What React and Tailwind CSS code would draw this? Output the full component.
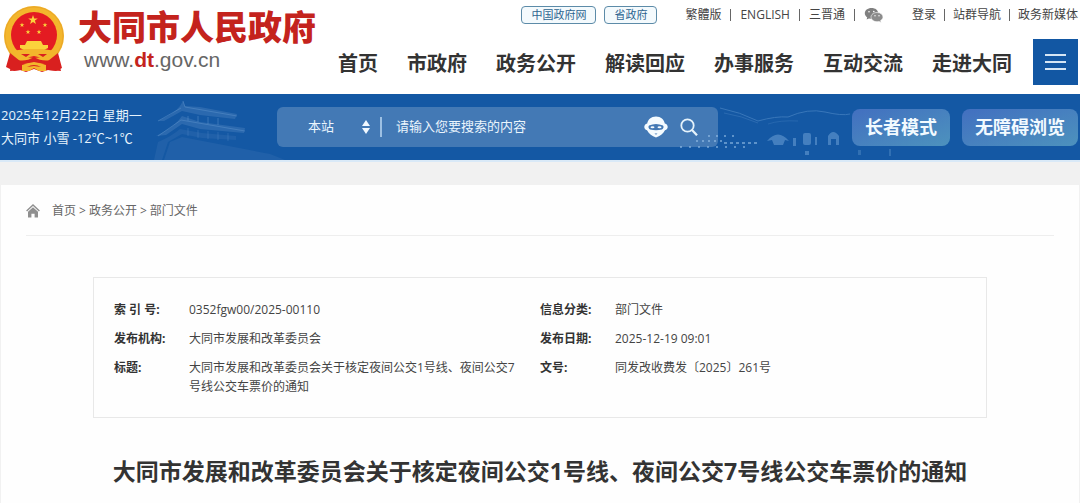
import React, { useState } from 'react';

const navItems = ['首页', '市政府', '政务公开', '解读回应', '办事服务', '互动交流', '走进大同'];

const docInfo = [
  { label: '索 引 号:', value: '0352fgw00/2025-00110' },
  { label: '信息分类:', value: '部门文件' },
  { label: '发布机构:', value: '大同市发展和改革委员会' },
  { label: '发布日期:', value: '2025-12-19 09:01' },
  { label: '标题:', value: '大同市发展和改革委员会关于核定夜间公交1号线、夜间公交7号线公交车票价的通知' },
  { label: '文号:', value: '同发改收费发〔2025〕261号' },
];

const star = 'M0 -5 L1.2 -1.6 L4.8 -1.5 L1.9 0.6 L2.9 4 L0 2 L-2.9 4 L-1.9 0.6 L-4.8 -1.5 L-1.2 -1.6 Z';

const Emblem = () => (
  <svg viewBox="0 0 64 68" className="h-[68px] w-16 shrink-0" aria-hidden="true">
    <path d="M10 52 L8 66 L18 65 L24 67 L32 64 L40 67 L46 65 L59 66 L55 50 Z" fill="#d9201f" />
    <circle cx="32" cy="31" r="30" fill="#f3b62c" />
    <circle cx="32" cy="31" r="29" fill="none" stroke="#eaa628" strokeWidth="1" />
    <circle cx="32" cy="30" r="23" fill="#e41b22" />
    <g fill="#fbd23c">
      <path d={star} transform="translate(31 15)" />
      <path d={star} transform="translate(20 20) scale(.5)" />
      <path d={star} transform="translate(43 20) scale(.5)" />
      <path d={star} transform="translate(26 27) scale(.5)" />
      <path d={star} transform="translate(37 27) scale(.5)" />
      <path d="M25 36 h14 l2 4 h5 v3 l-4 2 h-20 l-4 -2 v-3 h5 Z" />
    </g>
    <path d="M9 46 L24 44 H40 L55 46 L45 54 L32 51 L19 54 Z" fill="#f3b62c" />
    <path d="M19 49 H28 L24 52 Z M36 49 H45 L41 52 Z" fill="#d9201f" />
    <path d="M15 55 Q24 57 32 52 Q40 57 49 55 L47 60 L32 57 L17 60 Z" fill="#d9201f" />
    <path d="M20 60 Q32 56 44 60 V66 H37 L32 63 L27 66 H20 Z" fill="#f3b62c" />
    <path d="M25 62 Q32 58 39 62 L32 61 Z" fill="#d9201f" />
    <path d="M8 48 L4 62 L12 66 L19 65 L18 56 Z M56 48 L60 63 L54 66 L46 65 L46 56 Z" fill="#d9201f" />
  </svg>
);

const WechatIcon = () => (
  <svg viewBox="0 0 20 16" className="h-4 w-5" aria-hidden="true">
    <path d="M7.5 1 C3.6 1 .8 3.3.8 6.3 c0 1.7.9 3.2 2.4 4.2 L2.6 12.6 5 11.4 c.8.2 1.6.3 2.5.3 C11.4 11.7 14.2 9.4 14.2 6.3 S11.4 1 7.5 1Z" fill="#808080" />
    <path d="M13 5.5 c-3.4 0-6 2-6 4.6 s2.6 4.6 6 4.6 c.7 0 1.4-.1 2-.3 l2.2 1.1-.6-1.9 c1.5-.8 2.4-2 2.4-3.5 0-2.6-2.6-4.6-6-4.6Z" fill="#8c8c8c" stroke="#fff" strokeWidth=".6" />
    <g fill="#fff">
      <circle cx="5" cy="4.7" r=".8" />
      <circle cx="9.8" cy="4.5" r=".8" />
      <circle cx="11" cy="8.7" r=".7" />
      <circle cx="15" cy="8.7" r=".7" />
    </g>
  </svg>
);

const RobotIcon = () => (
  <svg viewBox="0 0 24 22" className="h-[22px] w-6" aria-hidden="true">
    <path d="M12 .5 C7 .5 4 3.5 3.2 7.5 C1 8 .3 9.5.3 11 s1 3 2.7 3.2 C5 18 8 20 12 21.5 C16 20 19 18 21 14.2 C22.7 14 23.7 12.5 23.7 11 S23 8 20.8 7.5 C20 3.5 17 .5 12 .5Z" fill="#f4fbff" />
    <path d="M5 9.5 Q12 6.5 19 9.5 Q20.5 11.5 18 13.5 Q12 15 6 13.5 Q3.5 11.5 5 9.5Z" fill="#4379b5" />
    <ellipse cx="8.5" cy="11.2" rx="2" ry="1" fill="#f4fbff" />
    <ellipse cx="15.5" cy="11.2" rx="2" ry="1" fill="#f4fbff" />
    <path d="M10.5 17.5 h3 l-1.5 1.2Z" fill="#4379b5" />
  </svg>
);

const SearchIcon = () => (
  <svg viewBox="0 0 18 18" className="size-[18px]" fill="none" stroke="#e6f3fb" strokeWidth="1.8" aria-hidden="true">
    <circle cx="7.5" cy="7.5" r="6.2" />
    <path d="M12 12 L17 17.3" strokeWidth="2.2" />
  </svg>
);

const HomeIcon = () => (
  <svg viewBox="0 0 14 14" className="size-[14px]" aria-hidden="true">
    <path d="M.6 7 L7 1 L13.4 7" fill="none" stroke="#8f8f8f" strokeWidth="1.4" />
    <path d="M2 7.8 L7 3.3 L12 7.8 V13.5 H8.6 V9.8 H5.4 V13.5 H2Z" fill="#8f8f8f" />
  </svg>
);

// faint city gate tower behind the weather text
const GateTower = () => (
  <svg viewBox="0 0 160 66" className="absolute bottom-0 left-[130px] h-[66px] w-40" aria-hidden="true">
    <g fill="#3f78b8" opacity=".55">
      <path d="M53 7 L55 12 L70 13 L107 20 L105 25 L70 21 L52 17 L34 27 L28 27 Q44 20 50 12Z" />
      <path d="M52 22 L70 28 L115 34 L114 39 L70 35 L52 30 L36 41 L26 42 Q42 34 48 27Z" />
      <path d="M50 35 L72 39 L106 42 V46 L72 44 L52 40 L38 48 L32 66 H24 L28 48 Q42 42 50 35Z" opacity=".5" />
      <path d="M40 48 L52 43 L140 60 L155 66 H34Z" opacity=".5" />
    </g>
    <g stroke="#5d93cc" strokeWidth="1" opacity=".5" fill="none">
      <path d="M53 7 L55 13 L107 22" />
      <path d="M28 27 L51 14" />
      <path d="M28 42 L51 26 L115 37" />
      <path d="M58 22 V27 M68 22 V28 M78 23 V30 M88 24 V31" />
      <path d="M58 34 V42 M68 36 V44 M78 37 V45 M88 38 V46 M98 39 V47" opacity=".6" />
    </g>
  </svg>
);

// grotto skyline on the right of the bar
const Skyline = () => (
  <svg viewBox="0 0 260 66" className="absolute right-[140px] bottom-0 h-[66px] w-[260px]" aria-hidden="true">
    <g stroke="#5d95cf" fill="none" opacity=".5">
      <path d="M40 14 Q60 18 78 27 Q96 22 108 23 Q128 14 145 18 T170 20" />
      <path d="M44 19 Q62 22 78 29" opacity=".6" />
      <path d="M88 30 Q100 26 118 27" opacity=".5" />
    </g>
    <g stroke="#9cc4ea" opacity=".55" strokeWidth="2">
      <path d="M16 47 H44" strokeDasharray="2 4" />
      <path d="M0 53 H66" strokeDasharray="2 7" />
      <path d="M28 42 H56" strokeDasharray="2 6" />
      <path d="M44 49 H80" strokeDasharray="3 3" />
    </g>
    <g fill="#7fb0e0" opacity=".45">
      <path d="M87 47 Q98 34 109 47 L105 46 L103 51 H94 L92 46Z" />
      <rect x="113" y="44" width="3" height="8" />
      <rect x="123" y="39" width="8" height="12" rx="2" />
      <rect x="135" y="43" width="2" height="8" />
      <path d="M148 51 V42 Q153 34 159 42 V51 H156 V45 H151 V51Z" />
      <rect x="125" y="57" width="4" height="4" />
      <rect x="178" y="56" width="3" height="5" opacity=".6" />
      <rect x="209" y="55" width="2" height="7" opacity=".6" />
    </g>
  </svg>
);

const Divider = () => <span className="h-3 w-px bg-[#666]" />;

const TopLinks = () => (
  <div className="flex items-center justify-end text-xs leading-[18px] text-[#444]">
    <a href="#" className="flex h-[18px] items-center rounded border border-[#5c8ba8] bg-[#f4fafd] px-[9px] text-[11px] text-[#2d6590]">中国政府网</a>
    <a href="#" className="ml-2 flex h-[18px] items-center rounded border border-[#5c8ba8] bg-[#f4fafd] px-[9px] text-[11px] text-[#2d6590]">省政府</a>
    <div className="ml-7 flex items-center gap-[9px]">
      <a href="#">繁體版</a>
      <Divider />
      <a href="#">ENGLISH</a>
      <Divider />
      <a href="#">三晋通</a>
      <Divider />
      <a href="#" aria-label="微信"><WechatIcon /></a>
    </div>
    <div className="ml-7 flex items-center gap-2">
      <a href="#">登录</a>
      <Divider />
      <a href="#">站群导航</a>
      <Divider />
      <a href="#">政务新媒体</a>
    </div>
  </div>
);

const Header = () => (
  <header className="flex h-[94px] items-start justify-between bg-white px-[2px]">
    <a href="#" className="flex shrink-0 gap-3 pt-[5px]">
      <Emblem />
      <span className="block">
        <span className="block text-[34px] leading-[44px] font-black text-[#c4231d]">大同市人民政府</span>
        <span className="block pl-[6px] font-['Liberation_Sans',sans-serif] text-[21px] leading-[22px] text-[#666]">
          www.<b className="text-[#c4231d]">dt</b>.gov.cn
        </span>
      </span>
    </a>
    <div className="pt-[6px]">
      <TopLinks />
      <div className="mt-[15px] flex items-center justify-end">
        <nav className="flex gap-[29px] pt-1 text-xl font-bold text-[#333]">
          {navItems.map(item => (
            <a key={item} href="#" className="whitespace-nowrap">{item}</a>
          ))}
        </nav>
        <button aria-label="菜单" className="ml-[21px] flex h-[46px] w-[45px] flex-col items-center justify-center gap-[5px] bg-[#1257a3]">
          <span className="h-[2px] w-[21px] bg-[#d5e6f5]" />
          <span className="h-[2px] w-[21px] bg-[#d5e6f5]" />
          <span className="h-[2px] w-[21px] bg-[#d5e6f5]" />
        </button>
      </div>
    </div>
  </header>
);

const SearchBar = () => {
  const [keyword, setKeyword] = useState('');

  return (
    <form
      onSubmit={e => e.preventDefault()}
      className="flex h-10 flex-1 items-center rounded-md bg-[#4379b5] pr-5 pl-[31px] text-[13px] text-[#eaf5fd]"
    >
      <label className="relative flex w-[62px] items-center">
        <select aria-label="搜索范围" className="w-full appearance-none bg-transparent outline-none">
          <option>本站</option>
        </select>
        <svg viewBox="0 0 8 14" className="pointer-events-none absolute right-0 h-[14px] w-2" fill="#f0f8ff" aria-hidden="true">
          <path d="M4 0 L8 6 H0Z M4 14 L0 8 H8Z" />
        </svg>
      </label>
      <span className="ml-[10px] h-5 w-[2px] bg-[#9dc0e3]" />
      <input
        aria-label="搜索"
        value={keyword}
        onChange={e => setKeyword(e.target.value)}
        placeholder="请输入您要搜索的内容"
        className="ml-[14px] min-w-0 flex-1 bg-transparent outline-none placeholder:text-[#eaf5fd]"
      />
      <button type="button" aria-label="智能问答"><RobotIcon /></button>
      <button type="submit" aria-label="搜索" className="ml-3"><SearchIcon /></button>
    </form>
  );
};

const ToolBar = () => (
  <div className="relative h-[68px] border-b-2 border-[#d9e9f7] bg-[#1458a4]">
    <GateTower />
    <div className="relative flex h-full items-center pr-[2px] pl-px">
      <div className="w-[276px] text-[13px] leading-[23px] text-[#e6f3fc]">
        <p>2025年12月22日 星期一</p>
        <p>大同市 小雪 -12℃~1℃</p>
      </div>
      <SearchBar />
      <div className="ml-[134px] flex gap-3 text-lg font-bold text-[#f2faff]">
        <button className="h-[37px] rounded-lg bg-linear-to-br from-[#426fc0] to-[#4d92bd] px-[13px]">长者模式</button>
        <button className="h-[37px] rounded-lg bg-linear-to-br from-[#426fc0] to-[#4d92bd] px-[13px]">无障碍浏览</button>
      </div>
    </div>
    <div className="pointer-events-none absolute inset-0">
      <Skyline />
    </div>
  </div>
);

const Breadcrumb = () => (
  <nav className="mx-[25px] flex h-[51px] items-center border-b border-[#eee] pt-[2px] text-xs text-[#666]">
    <HomeIcon />
    <div className="ml-3 flex gap-[3px]">
      <a href="#">首页</a>
      <span>&gt;</span>
      <a href="#">政务公开</a>
      <span>&gt;</span>
      <a href="#">部门文件</a>
    </div>
  </nav>
);

const DocInfo = () => (
  <dl className="mx-[92px] mt-[41px] grid grid-cols-2 gap-y-[10px] border border-[#e8e8e8] px-5 pt-[22px] pb-[21px] text-xs leading-[19px] text-[#444]">
    {docInfo.map(({ label, value }) => (
      <div key={label} className="flex">
        <dt className="w-[75px] shrink-0 font-bold text-[#333]">{label}</dt>
        <dd className="pr-5">{value}</dd>
      </div>
    ))}
  </dl>
);

const App = () => {
  return (
    <div className="flex min-h-screen flex-col bg-[#f1f1f1] font-['Open_Sans','Noto_Sans_CJK_SC',sans-serif]">
      <Header />
      <ToolBar />
      <main className="mx-px mt-[23px] flex-1 bg-[#fefefe]">
        <Breadcrumb />
        <DocInfo />
        <h1 className="mt-[37px] text-center text-[23px] leading-8 font-bold text-[#333]">
          大同市发展和改革委员会关于核定夜间公交1号线、夜间公交7号线公交车票价的通知
        </h1>
      </main>
    </div>
  );
};

export default App;
